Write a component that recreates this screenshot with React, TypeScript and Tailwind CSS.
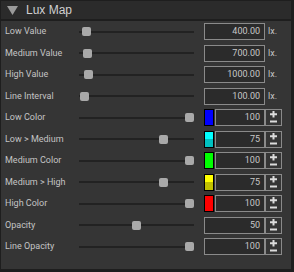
import React from 'react'

type Row = {
    label: string
    thumb: number
    value: string
    kind: 'lux' | 'color' | 'step'
    top?: string
    bottom?: string
}

const rows: Row[] = [
    { label: 'Low Value', thumb: 2.5, value: '400.00', kind: 'lux' },
    { label: 'Medium Value', thumb: 3.5, value: '700.00', kind: 'lux' },
    { label: 'High Value', thumb: 4.5, value: '1000.00', kind: 'lux' },
    { label: 'Line Interval', thumb: 1, value: '100.00', kind: 'lux' },
    { label: 'Low Color', thumb: 106, value: '100', kind: 'color', top: '#0000ff', bottom: '#0000ff' },
    { label: 'Low > Medium', thumb: 79.5, value: '75', kind: 'color', top: '#00ffff', bottom: '#00c0c0' },
    { label: 'Medium Color', thumb: 106, value: '100', kind: 'color', top: '#00ff00', bottom: '#00ff00' },
    { label: 'Medium > High', thumb: 79.5, value: '75', kind: 'color', top: '#ffff00', bottom: '#c0c000' },
    { label: 'High Color', thumb: 106, value: '100', kind: 'color', top: '#ff0000', bottom: '#ff0000' },
    { label: 'Opacity', thumb: 53, value: '50', kind: 'step' },
    { label: 'Line Opacity', thumb: 106, value: '100', kind: 'step' },
]

function StepButton() {
    return (
        <div className="w-[17px] h-[17px] border border-[#8a8a8a] bg-[#353535] flex items-center justify-center">
            <svg width="15" height="15" viewBox="0 0 15 15">
                <path d="M7.5 1v6.5M4 4.25h7" stroke="#dcdcdc" strokeWidth="2" />
                <path d="M4 11.5h7" stroke="#dcdcdc" strokeWidth="2" />
            </svg>
        </div>
    )
}

function ValueBox({ value, width }: { value: string; width: string }) {
    return (
        <div className={`${width} h-[17px] border border-[#8a8a8a] bg-[#2b2b2b] flex items-center justify-end pr-[4px] text-[9px] text-[#c8c8c8]`}>
            {value}
        </div>
    )
}

function SettingRow({ row }: { row: Row }) {
    return (
        <div className="h-[21.5px] flex items-center">
            <div className="w-[78px] pl-[4px] text-[9px] text-[#c4c4c4] whitespace-nowrap">{row.label}</div>
            {/* slider */}
            <div className="relative w-[115px] h-[9px] flex items-center">
                <div className="w-full h-[2px] bg-[#222222]" />
                <div
                    className="absolute top-0 w-[9px] h-[9px] rounded-[2px] bg-[#a9a9a9]"
                    style={{ left: row.thumb }}
                />
            </div>
            <div className="ml-[10px] flex items-center">
                {row.kind === 'lux' && (
                    <>
                        <ValueBox value={row.value} width="w-[61px]" />
                        <span className="ml-[3px] text-[9px] text-[#c4c4c4]">lx.</span>
                    </>
                )}
                {row.kind === 'color' && (
                    <>
                        <div className="w-[10px] h-[17px] border border-black flex flex-col">
                            <div className="flex-1" style={{ background: row.top }} />
                            <div className="flex-1" style={{ background: row.bottom }} />
                        </div>
                        <div className="ml-px">
                            <ValueBox value={row.value} width="w-[50px]" />
                        </div>
                        <StepButton />
                    </>
                )}
                {row.kind === 'step' && (
                    <>
                        <ValueBox value={row.value} width="w-[61px]" />
                        <StepButton />
                    </>
                )}
            </div>
        </div>
    )
}

export default function App() {
    return (
        <div
            className="w-[294px] h-[272px] bg-[#1e1e1e] pl-px pt-px pr-[3px] pb-[3px] flex flex-col"
            style={{ fontFamily: 'Roboto, "Liberation Sans", sans-serif' }}
        >
            {/* Header */}
            <div className="h-[18px] bg-[#2b2b2b] flex items-center border-b-2 border-[#1e1e1e] box-content">
                <svg width="11" height="9" viewBox="0 0 11 9" className="ml-[6px]">
                    <path d="M0 0h11L5.5 9z" fill="#9a9a9a" />
                </svg>
                <span className="ml-[8px] text-[12px] text-[#d0d0d0]" style={{ fontFamily: '"Liberation Sans", sans-serif' }}>
                    Lux Map
                </span>
            </div>

            {/* Body */}
            <div className="flex-1 bg-[#353535] flex flex-col">
                {rows.map(r => (
                    <SettingRow key={r.label} row={r} />
                ))}
            </div>
        </div>
    )
}
